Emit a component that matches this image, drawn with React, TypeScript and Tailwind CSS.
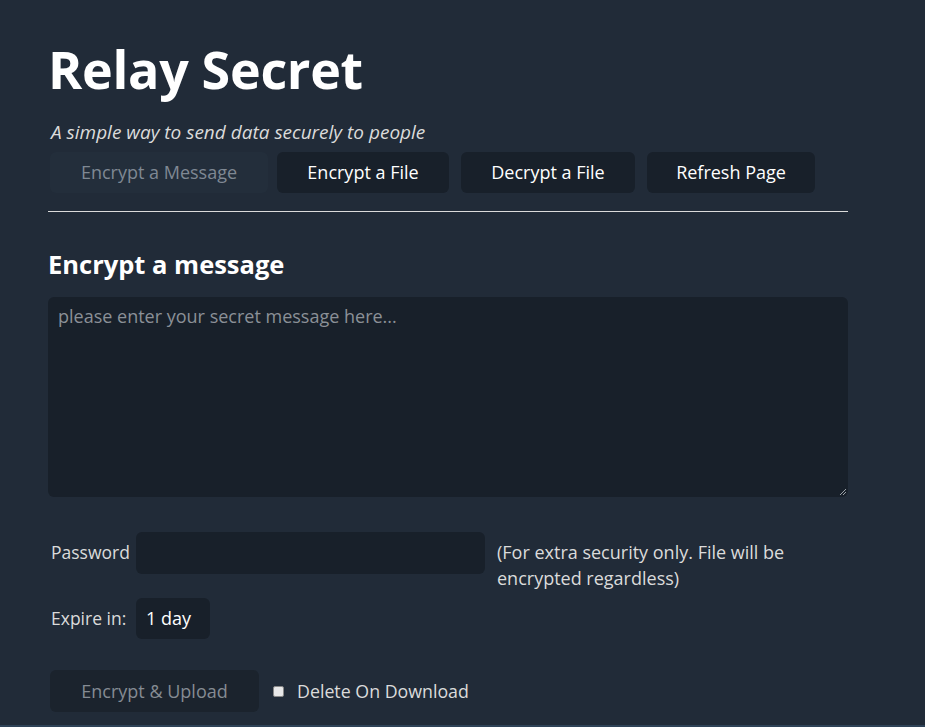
import React from "react";

const font = { fontFamily: '"Open Sans", "Noto Sans", sans-serif' };

export default function App() {
  return (
    <div className="min-h-[727px] w-full bg-[#212b38] text-[#dbdbdb] relative" style={font}>
      <div className="w-[800px] ml-[48px] pt-[29px] flex flex-col">
        <h1 className="text-[52px] leading-[80px] font-bold text-white tracking-[-0.3px]">Relay Secret</h1>
        <p className="italic text-[19px] leading-[24px] mt-[11px] ml-[3px] text-[#dbdbdb]">A simple way to send data securely to people</p>
        <div className="flex items-center mt-[8px]">
          <button className="ml-[2px] h-[41px] w-[218px] rounded-[6px] bg-[#232e3b] text-[#7f8893] text-[18px]">Encrypt a Message</button>
          <button className="ml-[9px] h-[41px] w-[172px] rounded-[6px] bg-[#18202a] text-white text-[18px]">Encrypt a File</button>
          <button className="ml-[12px] h-[41px] w-[174px] rounded-[6px] bg-[#18202a] text-white text-[18px]">Decrypt a File</button>
          <button className="ml-[12px] h-[41px] w-[168px] rounded-[6px] bg-[#18202a] text-white text-[18px]">Refresh Page</button>
        </div>
        <div className="mt-[18px] h-px bg-[#dbdbdb]" />
        <h2 className="mt-[34px] text-[25.5px] leading-[36px] font-bold text-white">Encrypt a message</h2>
        <div className="relative mt-[15px] h-[200px] rounded-[6px] bg-[#18202a] px-[10px] pt-[6px]">
          <span className="text-[18px] text-[#8b9097]">please enter your secret message here...</span>
          <svg className="absolute right-[1px] bottom-[1px]" width="8" height="8" viewBox="0 0 8 8">
            <path d="M1 7 L7 1 M4 7 L7 4" stroke="#9aa0a6" strokeWidth="1" />
          </svg>
        </div>
        <div className="flex items-start mt-[35px]">
          <label className="ml-[3px] mt-[8px] text-[17.5px] leading-[24px] w-[85px]">Password</label>
          <div className="h-[42px] w-[349px] rounded-[6px] bg-[#18202a]" />
          <p className="ml-[12px] mt-[7px] text-[18px] leading-[26px] w-[330px]">(For extra security only. File will be encrypted regardless)</p>
        </div>
        <div className="flex items-center mt-[7px]">
          <label className="ml-[3px] text-[17.5px] w-[85px]">Expire in:</label>
          <div className="h-[41px] w-[74px] rounded-[6px] bg-[#18202a] text-white text-[18px] flex items-center pl-[10px]">1 day</div>
        </div>
        <div className="flex items-center mt-[31px]">
          <button className="ml-[2px] h-[42px] w-[209px] rounded-[6px] bg-[#1b232d] text-[#858b93] text-[18px]">Encrypt &amp; Upload</button>
          <span className="ml-[14px] w-[11px] h-[11px] rounded-[2px] bg-[#e8e8e8] border border-[#888]" />
          <span className="ml-[13px] text-[17.8px]">Delete On Download</span>
        </div>
      </div>
      <div className="absolute left-0 right-0 top-[725px] h-[2px] bg-[#2e4257]" />
    </div>
  );
}
